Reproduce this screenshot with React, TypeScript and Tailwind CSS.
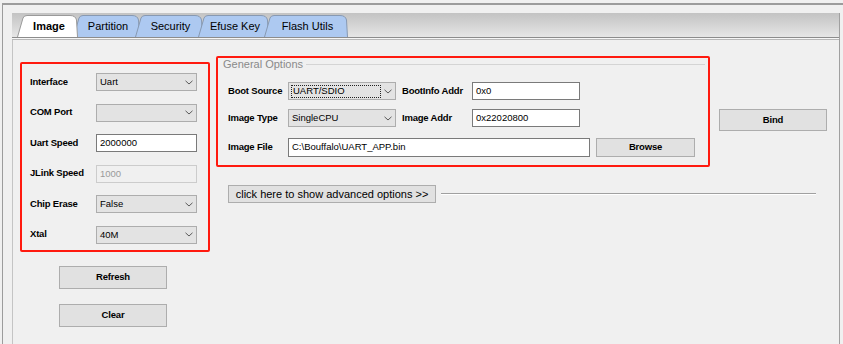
import React from "react"

const tabs = [
  { name: "Image", width: 61, active: true },
  { name: "Partition", width: 67 },
  { name: "Security", width: 68 },
  { name: "Efuse Key", width: 71 },
  { name: "Flash Utils", width: 84 },
]

const Chevron = () => (
  <svg width="8" height="5" viewBox="0 0 8 5" className="shrink-0">
    <path d="M0.5 0.8 L4 4 L7.5 0.8" fill="none" stroke="#5a5a5a" strokeWidth="1" />
  </svg>
)

const Select = ({ value, w, focus }: { value: string; w: string; focus?: boolean }) => (
  <div className={`${w} h-[18px] bg-[#e3e3e3] border border-[#adadad] flex items-center justify-between pl-[2px] pr-[3px]`}>
    {focus ? (
      <span className="flex-1 mr-[3px] h-[13px] border border-dotted border-[#222] flex items-center pl-[1px] leading-none">{value}</span>
    ) : (
      <span className="pl-[1px] leading-none">{value}</span>
    )}
    <Chevron />
  </div>
)

const TextInput = ({ value, w, disabled }: { value: string; w: string; disabled?: boolean }) => (
  <div
    className={`${w} h-[18px] border flex items-center pl-[3px] leading-none ${
      disabled ? "bg-[#f0f0f0] border-[#cccccc] text-[#9a9a9a]" : "bg-white border-[#7a7a7a]"
    }`}
  >
    {value}
  </div>
)

const Button = ({ label, w, h }: { label: string; w: string; h: string }) => (
  <div className={`${w} ${h} bg-[#e1e1e1] border border-[#adadad] flex items-center justify-center font-bold text-[9.5px] tracking-[-0.2px]`}>
    {label}
  </div>
)

const Tab = ({ name, width, active, first }: { name: string; width: number; active?: boolean; first?: boolean }) => {
  const d = `M0.5 22 L6 3 Q7 0.5 10 0.5 L${width - 8} 0.5 Q${width - 2.5} 0.5 ${width - 1.5} 5 L${width - 0.5} 22`
  return (
    <div
      className={`relative h-[22px] flex items-center justify-center pl-[3px] text-[11px] ${first ? "" : "-ml-[5px]"} ${
        active ? "z-10 font-bold" : ""
      }`}
      style={{ width }}
    >
      <svg className="absolute inset-0" width={width} height={22} viewBox={`0 0 ${width} 22`}>
        <path d={d} fill={active ? "#ffffff" : "#adc9f1"} stroke={active ? "#9a9a9a" : "#8799b2"} strokeWidth="1" />
      </svg>
      <span className="relative">{name}</span>
    </div>
  )
}

const leftRows: { label: string; field: React.ReactNode }[] = [
  { label: "Interface", field: <Select value="Uart" w="w-[101px]" /> },
  { label: "COM Port", field: <Select value="" w="w-[101px]" /> },
  { label: "Uart Speed", field: <TextInput value="2000000" w="w-[101px]" /> },
  { label: "JLink Speed", field: <TextInput value="1000" w="w-[101px]" disabled /> },
  { label: "Chip Erase", field: <Select value="False" w="w-[101px]" /> },
  { label: "Xtal", field: <Select value="40M" w="w-[101px]" /> },
]

const Label = ({ text, w }: { text: string; w: string }) => (
  <span className={`${w} shrink-0 font-bold text-[9.5px] tracking-[-0.2px]`}>{text}</span>
)

export default function App() {
  return (
    <div className="w-[843px] h-[344px] overflow-hidden bg-[#f0f0f0] pt-[3px] text-black text-[9.5px] font-['Liberation_Sans',Arial,sans-serif]">
      <div className="h-full ml-[2px] border-t-2 border-l border-[#9c9c9c] pl-[9px] pt-[8px]">
        <div className="w-[828px] h-full border-r border-[#a0a0a0] flex flex-col">
          {/* tab strip */}
          <div className="h-[25px] shrink-0 bg-gradient-to-b from-[#c3c3c3] to-[#e6e6e6] border-b border-[#8c8c8c] flex items-end pl-[5px]">
            {tabs.map((t, i) => (
              <Tab key={t.name} name={t.name} width={t.width} active={t.active} first={i === 0} />
            ))}
          </div>
          <div className="h-[2px] shrink-0 bg-[#f6f6f6] border-b border-[#b8b8b8]"></div>

          <div className="flex-1 border-l border-[#c4c4c4] flex items-start pl-[7px]">
            {/* left column */}
            <div className="mt-[22px] w-[190px] flex flex-col">
              <div className="h-[190px] border-2 border-[#ff1a0f] rounded-[2px] pt-[9px] pl-[8px] flex flex-col gap-[12.5px]">
                {leftRows.map((r) => (
                  <div key={r.label} className="flex items-center h-[18px]">
                    <Label text={r.label} w="w-[66px]" />
                    {r.field}
                  </div>
                ))}
              </div>
              <div className="ml-[39px] mt-[14px] flex flex-col gap-[15px]">
                <Button label="Refresh" w="w-[108px]" h="h-[23px]" />
                <Button label="Clear" w="w-[108px]" h="h-[23px]" />
              </div>
            </div>

            {/* right column */}
            <div className="ml-[6px] mt-[16px] flex flex-col">
              <div className="flex items-start">
                <div className="w-[494px] h-[111px] border-2 border-[#ff1a0f] rounded-[2px] pl-[10px] pr-[13px] flex flex-col">
                  <div className="h-[12px] -ml-[5px] -mr-[10px] flex items-center">
                    <span className="text-[11px] text-[#8a8a8a] pr-[3px] leading-none">General Options</span>
                    <div className="flex-1 border-t border-[#d4d4d4]"></div>
                  </div>
                  <div className="mt-[11px] flex items-center h-[20px]">
                    <Label text="Boot Source" w="w-[60px]" />
                    <Select value="UART/SDIO" w="w-[108px]" focus />
                    <Label text="BootInfo Addr" w="w-[70px] ml-[6px]" />
                    <TextInput value="0x0" w="w-[108px]" />
                  </div>
                  <div className="mt-[7px] flex items-center h-[20px]">
                    <Label text="Image Type" w="w-[60px]" />
                    <Select value="SingleCPU" w="w-[108px]" />
                    <Label text="Image Addr" w="w-[70px] ml-[6px]" />
                    <TextInput value="0x22020800" w="w-[108px]" />
                  </div>
                  <div className="mt-[9px] flex items-center h-[20px]">
                    <Label text="Image File" w="w-[60px]" />
                    <div className="w-[302px] h-[19px] bg-white border border-[#7a7a7a] flex items-center pl-[3px] leading-none">
                      C:\Bouffalo\UART_APP.bin
                    </div>
                    <div className="ml-[6px]">
                      <Button label="Browse" w="w-[99px]" h="h-[19px]" />
                    </div>
                  </div>
                </div>
                <div className="ml-[9px] mt-[53px]">
                  <Button label="Bind" w="w-[108px]" h="h-[22px]" />
                </div>
              </div>

              <div className="mt-[18px] pl-[12px] flex items-center">
                <div className="w-[208px] h-[18px] bg-[#e1e1e1] border border-[#adadad] flex items-center justify-center text-[11px] leading-none">
                  click here to show advanced options &gt;&gt;
                </div>
                <div className="ml-[5px] w-[375px] h-[2px] border-t border-[#a0a0a0] border-b border-b-white"></div>
              </div>
            </div>
          </div>
        </div>
      </div>
    </div>
  )
}
